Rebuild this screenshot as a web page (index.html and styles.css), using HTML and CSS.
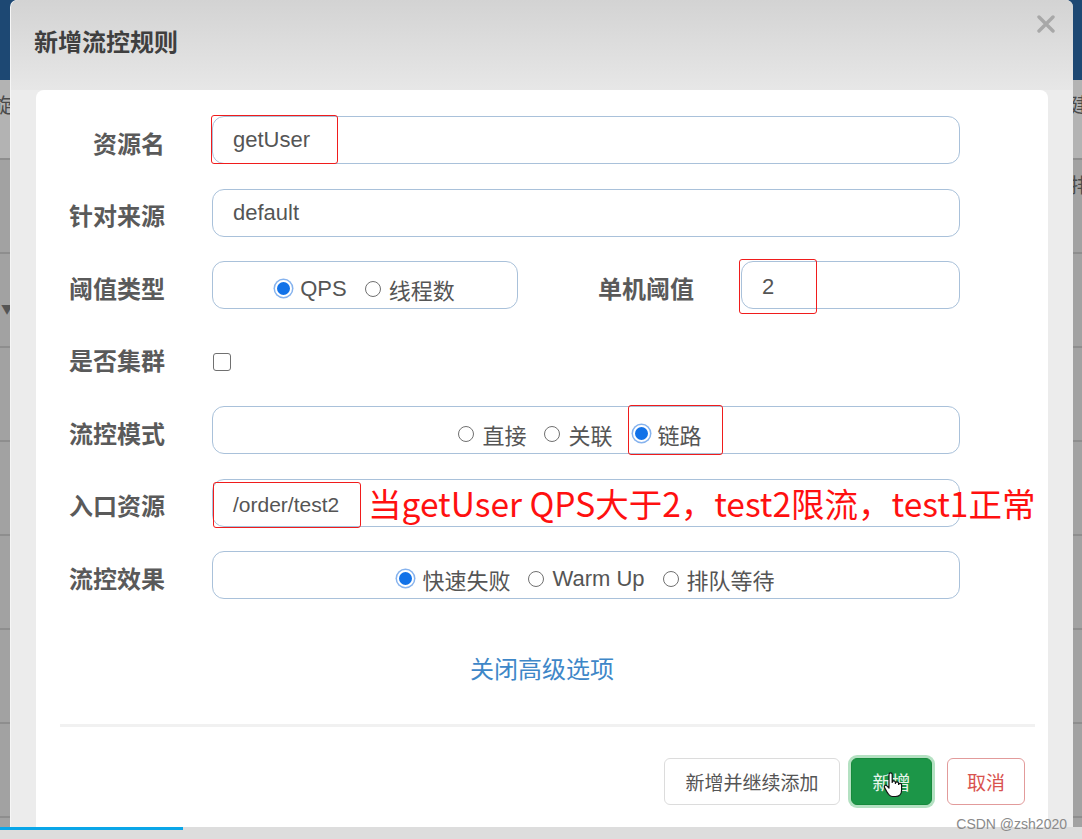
FILE: index.html
```html
<!DOCTYPE html>
<html lang="zh-CN">
<head>
    <meta charset="UTF-8">
    <title>新增流控规则</title>
    <link rel="stylesheet" href="styles.css">
</head>
<body>
    <div class="page">
        <div class="topbar"></div>
        <div class="page-row light"><span class="edge">旋</span><span class="edge">建</span></div>
        <div class="page-row"><span class="edge"></span><span class="edge">排</span></div>
        <div class="page-row"><span class="edge caret">▼</span><span class="edge"></span></div>
        <div class="page-row"></div>
        <div class="page-row"></div>
        <div class="page-row"></div>
        <div class="page-row"></div>
        <div class="page-row"></div>
    </div>

    <div class="modal">
        <div class="modal-header">
            <h3>新增流控规则</h3>
            <span class="close">
                <svg width="18" height="18" viewBox="0 0 18 18"><path d="M2 2 L16 16 M16 2 L2 16" stroke="#a8a8a8" stroke-width="3.4" stroke-linecap="round"/></svg>
            </span>
        </div>
        <div class="modal-body">
            <div class="form-row">
                <label class="label">资源名</label>
                <div class="field"><span class="mark mark-name">getUser</span></div>
            </div>
            <div class="form-row">
                <label class="label">针对来源</label>
                <div class="field"><span class="value">default</span></div>
            </div>
            <div class="form-row">
                <label class="label">阈值类型</label>
                <div class="field radios short">
                    <span class="radio-item"><i class="radio on"></i>QPS</span>
                    <span class="radio-item"><i class="radio"></i>线程数</span>
                </div>
                <label class="label sub">单机阈值</label>
                <div class="field small"><span class="mark mark-count">2</span></div>
            </div>
            <div class="form-row">
                <label class="label">是否集群</label>
                <span class="checkbox"></span>
            </div>
            <div class="form-row">
                <label class="label">流控模式</label>
                <div class="field radios">
                    <span class="radio-item"><i class="radio"></i>直接</span>
                    <span class="radio-item"><i class="radio"></i>关联</span>
                    <span class="radio-item mark mark-chain"><i class="radio on"></i>链路</span>
                </div>
            </div>
            <div class="form-row">
                <label class="label">入口资源</label>
                <div class="field">
                    <span class="mark mark-entry">/order/test2</span>
                    <span class="note">当getUser QPS大于2，test2限流，test1正常</span>
                </div>
            </div>
            <div class="form-row">
                <label class="label">流控效果</label>
                <div class="field radios">
                    <span class="radio-item"><i class="radio on"></i>快速失败</span>
                    <span class="radio-item"><i class="radio"></i>Warm Up</span>
                    <span class="radio-item"><i class="radio"></i>排队等待</span>
                </div>
            </div>

            <div class="more">关闭高级选项</div>
            <div class="divider"></div>

            <div class="actions">
                <button class="btn btn-default">新增并继续添加</button>
                <button class="btn btn-success">新增
                    <svg class="hand" width="20" height="26" viewBox="0 0 20 26"><path d="M6 2.5 a1.6 1.6 0 0 1 3.2 0 v8 a1.6 1.6 0 0 1 3.2 0 v1 a1.6 1.6 0 0 1 3.2 0 v1 a1.6 1.6 0 0 1 3 0 v5.5 c0 4 -2.5 6.5 -6 6.5 h-3 c-2.8 0 -4 -1.6 -5.6 -4.5 l-2.6 -4.6 a1.5 1.5 0 0 1 2.5 -1.6 l2.1 2.2 z" fill="#fff" stroke="#111" stroke-width="1.2" stroke-linejoin="round"/></svg>
                </button>
                <button class="btn btn-cancel">取消</button>
            </div>
        </div>
    </div>

    <div class="player-bar"><div class="progress"></div></div>
    <div class="watermark">CSDN @zsh2020</div>
</body>
</html>
```

FILE: styles.css
```css
body {
    margin: 0;
    width: 1082px;
    height: 839px;
    overflow: hidden;
    background-color: #a2a2a2;
    font-family: "Noto Sans CJK SC", "Liberation Sans", sans-serif;
    position: relative;
}

/* page behind the dialog */
.page {
    display: flex;
    flex-direction: column;
}
.topbar {
    height: 80px;
    background-color: #1d4873;
}
.page-row {
    height: 92px;
    border-bottom: 2px solid #8e8e8e;
    display: flex;
    justify-content: space-between;
    align-items: flex-start;
    color: #4a4a4a;
    font-size: 20px;
    line-height: 30px;
}
.page-row.light {
    height: 78px;
    background-color: #b3b3b3;
}
.edge {
    margin: 10px -8px 0 -8px;
}
.caret {
    font-size: 12px;
    margin: 40px 0 0 1px;
    color: #555;
}

/* dialog */
.modal {
    position: absolute;
    left: 11px;
    top: 0;
    width: 1062px;
    height: 827px;
    background-color: #ececec;
    border-radius: 7px 7px 0 0;
    box-shadow: -1px 0 0 #f6f6f6;
    display: flex;
    flex-direction: column;
    overflow: hidden;
}
.modal-header {
    height: 90px;
    flex-shrink: 0;
    background: linear-gradient(#d3d3d3, #e7e7e7);
    position: relative;
}
.modal-header h3 {
    margin: 0;
    padding: 26px 0 0 23px;
    font-size: 24px;
    line-height: 30px;
    font-weight: bold;
    color: #3f3f3f;
}
.close {
    position: absolute;
    right: 18px;
    top: 14px;
}
.modal-body {
    flex: 1;
    margin: 0 25px;
    background-color: #fff;
    border-radius: 8px 8px 0 0;
    padding-top: 26px;
}

/* form */
.form-row {
    display: flex;
    align-items: center;
    height: 48px;
    margin-bottom: 24.5px;
    padding-left: 24px;
}
.label {
    width: 105px;
    margin-right: 47px;
    padding-top: 4px;
    text-align: right;
    font-size: 24px;
    font-weight: bold;
    color: #5a5a5a;
    white-space: nowrap;
}
.label.sub {
    width: 176px;
}
.field {
    box-sizing: border-box;
    width: 748px;
    height: 48px;
    border: 1px solid #a9c1da;
    border-radius: 12px;
    display: flex;
    align-items: stretch;
    font-family: "Liberation Sans", "Noto Sans CJK SC", sans-serif;
    font-size: 22px;
    color: #555;
}
.field.short {
    width: 306px;
}
.field.small {
    width: 219px;
}
.value {
    display: flex;
    align-items: center;
    padding-left: 20px;
}
.mark {
    box-sizing: border-box;
    flex-shrink: 0;
    display: flex;
    align-items: center;
    border: 1px solid #f01c1c;
    border-radius: 3px;
}
.mark-name {
    width: 127px;
    margin: -2px 0 -1px -2px;
    padding-left: 21px;
}
.mark-count {
    width: 78px;
    margin: -3px 0 -6px -3px;
    padding-left: 22px;
}
.mark-entry {
    width: 148px;
    margin: 2px 0 -2px 0;
    padding-left: 19px;
    font-size: 21px;
}
.note {
    margin-left: 7px;
    white-space: nowrap;
    display: flex;
    align-items: center;
    font-family: "Noto Sans CJK SC", sans-serif;
    font-size: 33.5px;
    color: #ff1010;
}

/* radios */
.radios {
    justify-content: center;
    align-items: center;
}
.radio-item {
    display: flex;
    align-items: center;
    margin: 0 9px;
    padding-top: 7px;
}
.radio {
    box-sizing: border-box;
    width: 16px;
    height: 16px;
    border-radius: 50%;
    border: 1.5px solid #707070;
    margin-right: 8px;
}
.radio.on {
    width: 17px;
    height: 17px;
    background-color: #1272e8;
    border: 2.5px solid #fff;
    box-shadow: 0 0 0 1.5px #86b3ee;
}
.mark-chain {
    align-self: stretch;
    padding: 7px 20px 0 4px;
    margin: -2px 0 -2px 6px;
}
.checkbox {
    width: 18px;
    height: 18px;
    box-sizing: border-box;
    border: 1.5px solid #707070;
    border-radius: 3px;
    margin: 8px 0 0 1px;
}

.more {
    text-align: center;
    padding-top: 28px;
    font-size: 24px;
    line-height: 32px;
    color: #3e87c8;
}
.divider {
    height: 3px;
    margin: 40px 13px 0 24px;
    background-color: #f1f1f1;
}

/* buttons */
.actions {
    display: flex;
    justify-content: flex-end;
    align-items: center;
    padding: 31px 23px 0 0;
}
.btn {
    box-sizing: border-box;
    height: 47px;
    border-radius: 6px;
    font-family: "Noto Sans CJK SC", sans-serif;
    font-size: 19px;
    background-color: #fff;
    cursor: pointer;
}
.btn-default {
    width: 176px;
    border: 1px solid #dcdcdc;
    color: #555;
}
.btn-success {
    width: 81px;
    margin-left: 11px;
    border: 1px solid #178a3c;
    background-color: #1c9648;
    color: #e8f5ec;
    box-shadow: 0 0 0 3px rgba(40, 170, 80, 0.35);
    position: relative;
}
.hand {
    position: absolute;
    left: 31px;
    top: 13px;
}
.btn-cancel {
    width: 78px;
    margin-left: 15px;
    border: 1px solid #e29b9b;
    color: #d9534f;
}

.player-bar {
    position: absolute;
    left: 0;
    bottom: 0;
    width: 100%;
    height: 12px;
    background-color: #dddddd;
}
.progress {
    width: 183px;
    height: 3px;
    background-color: #0aa6e8;
}
.watermark {
    position: absolute;
    right: 15px;
    bottom: 7px;
    font-family: "Liberation Sans", sans-serif;
    font-size: 14px;
    color: #8a8a8a;
}
```
